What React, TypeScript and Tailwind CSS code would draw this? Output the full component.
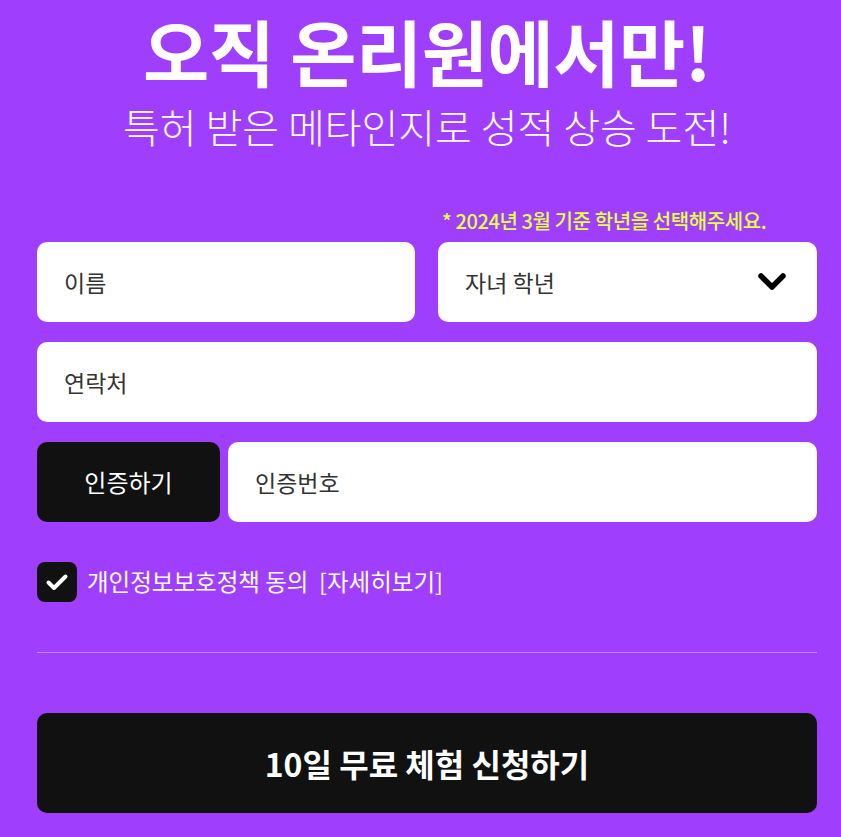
export default function App() {
  return (
    <div className="min-h-[837px] bg-[#9f3efd] pl-[37px] pr-[24px] pb-[24px] font-['Noto_Sans_CJK_KR','Noto_Sans',sans-serif]">
      {/* Headline */}
      <div className="pt-[6px] text-center text-white">
        <h1 className="text-[72px] leading-[88px] font-bold tracking-[-0.5px]">오직 온리원에서만!</h1>
        <p className="mt-[8px] text-[40px] leading-[48px] font-light">특허 받은 메타인지로 성적 상승 도전!</p>
      </div>

      {/* Note */}
      <div className="mt-[59px] grid grid-cols-[378px_1fr] gap-x-[23px]">
        <div />
        <p className="pl-[4px] text-[20px] leading-[24px] font-medium tracking-[-0.4px] text-[#e4ff45]">
          * 2024년 3월 기준 학년을 선택해주세요.
        </p>
      </div>

      {/* Name + grade */}
      <div className="mt-[9px] grid grid-cols-[378px_1fr] gap-x-[23px]">
        <input
          className="h-[80px] rounded-[10px] bg-white px-[27px] text-[23px] text-[#333] placeholder:text-[#333] outline-none"
          placeholder="이름"
        />
        <div className="flex h-[80px] items-center justify-between rounded-[10px] bg-white pl-[27px] pr-[30px] text-[23px] text-[#333]">
          <span>자녀 학년</span>
          <svg width="30" height="20" viewBox="0 0 30 20" fill="none">
            <path d="M4 4l11 11L26 4" stroke="#000" strokeWidth="5.5" strokeLinecap="round" strokeLinejoin="round" />
          </svg>
        </div>
      </div>

      {/* Phone */}
      <input
        className="mt-[20px] block h-[80px] w-full rounded-[10px] bg-white px-[27px] text-[23px] text-[#333] placeholder:text-[#333] outline-none"
        placeholder="연락처"
      />

      {/* Verify */}
      <div className="mt-[20px] flex gap-[8px]">
        <button className="h-[80px] w-[183px] shrink-0 rounded-[10px] bg-[#111] text-[24px] text-white">인증하기</button>
        <input
          className="h-[80px] flex-1 rounded-[10px] bg-white px-[27px] text-[23px] text-[#333] placeholder:text-[#333] outline-none"
          placeholder="인증번호"
        />
      </div>

      {/* Agreement */}
      <div className="mt-[40px] flex items-center gap-[10px]">
        <div className="flex h-[40px] w-[40px] items-center justify-center rounded-[8px] bg-[#111]">
          <svg width="24" height="20" viewBox="0 0 24 20" fill="none">
            <path d="M3.5 10.5l5.5 5.5L20.5 4.5" stroke="#fff" strokeWidth="4" strokeLinecap="round" strokeLinejoin="round" />
          </svg>
        </div>
        <span className="text-[23.5px] text-white">개인정보보호정책 동의&nbsp;&nbsp;[자세히보기]</span>
      </div>

      <div className="mt-[50px] h-px bg-[#c08bff]" />

      <button className="mt-[60px] h-[100px] w-full rounded-[10px] bg-[#111] text-[32px] font-bold text-white">
        10일 무료 체험 신청하기
      </button>
    </div>
  );
}
